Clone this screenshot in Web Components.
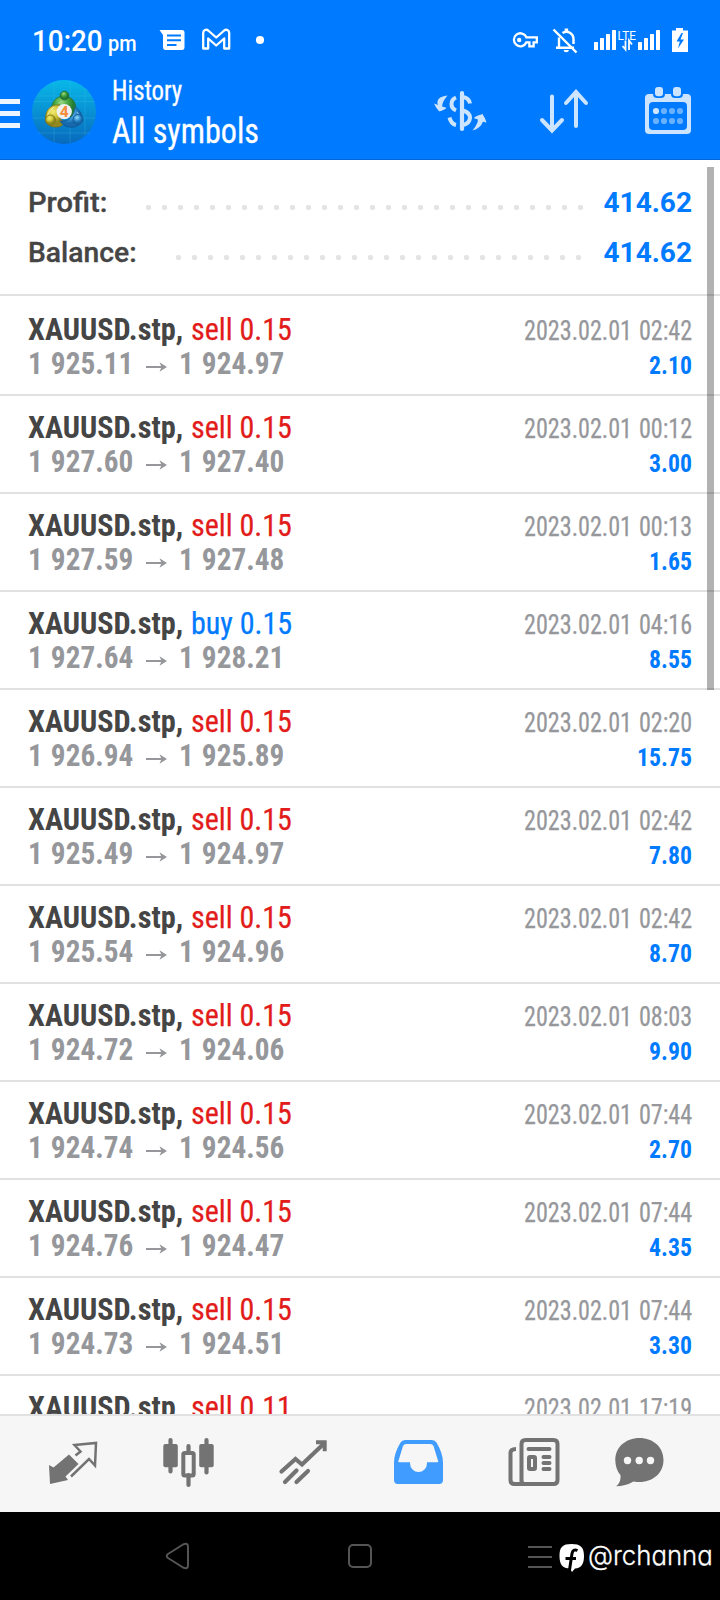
<!DOCTYPE html>
<html lang="en">
<head>
<meta charset="utf-8">
<title>History</title>
<style>
html,body{margin:0;padding:0}
body{width:720px;height:1600px;overflow:hidden;background:#fff;font-family:Roboto,"Liberation Sans",sans-serif}
</style>
</head>
<body>
<history-screen></history-screen>
<script>
const define = (name, html, setup) => {
  const t = document.createElement('template');
  t.innerHTML = html;
  customElements.define(name, class extends HTMLElement {
    connectedCallback() {
      if (this.shadowRoot) return;
      this.attachShadow({mode: 'open'}).append(t.content.cloneNode(true));
      if (setup) setup(this, this.shadowRoot);
    }
  });
};

// Narrow text: the sample string "ref" sets in exactly "w" pixels, other strings use the same ratio.
customElements.define('fit-text', class extends HTMLElement {
  connectedCallback() {
    if (this.shadowRoot) return;
    const root = this.attachShadow({mode: 'open'});
    root.innerHTML = '<style>:host{display:inline-block;white-space:pre;flex:none}span{display:inline-block;transform-origin:0 50%}</style><span></span>';
    const span = root.querySelector('span');
    const text = this.getAttribute('text');
    span.textContent = this.getAttribute('ref') || text;
    const k = this.getAttribute('w') / span.offsetWidth;
    span.textContent = text;
    const width = span.getBoundingClientRect().width;
    this.style.width = width * k + 'px';
    span.style.transform = `scaleX(${k})`;
  }
});

define('status-bar', `<style>
:host{display:flex;height:80px;box-sizing:border-box;padding:0 30px 0 32px;align-items:flex-start;color:#fff}
.time{display:flex;align-items:baseline;padding-top:24px;gap:5px;width:127px;line-height:34px}
.h{font-size:29px;font-weight:500}.p{font-size:22px;font-weight:500}
svg{display:block;flex:none}.r{margin-left:auto}
</style>
<div class="time"><fit-text class="h" text="10:20" w="71"></fit-text><fit-text class="p" text="pm" w="29"></fit-text></div>
<svg width="112" height="80" viewBox="159 0 112 80">
<path d="M159.500 30H182q2.500 0 2.500 2.500V47q0 3-2.500 3h-16.500q-2.500 0-2.500-3V35Z" fill="#fff"/>
<path d="M167 35.500h14M167 40.300h14M167 45h9.500" stroke="#007bff" stroke-width="2"/>
<path d="M203.200 48.500V33c0-3 3-4 5-2.500l8 7 8-7c2-1.500 5-.5 5 2.500v15.500h-5V38.500l-8 7-8-7v10Z" fill="none" stroke="#fff" stroke-width="2.300" stroke-linejoin="round"/>
<circle cx="260" cy="40" r="4.100" fill="#fff"/>
</svg>
<svg class="r" width="180" height="80" viewBox="510 0 180 80" fill="none" stroke="#fff">
<path d="M526.500 37.300h10.300v5h-3.200v4h-4.200v-4h-3a6.500 6.500 0 1 1 0-5Z" stroke-width="2.300"/><circle cx="519.200" cy="40" r="2.200" fill="#fff" stroke="none"/>
<path d="M559 37.500v10.300h15M556 47.800h18M562.500 33q3.500-2.500 7.500-.2 3.500 2.200 3.500 6.200v5" stroke-width="2.400"/><path d="M553.500 29.500l23 23" stroke-width="2.400"/><path d="M566.400 28.500v3" stroke-width="3.500"/><path d="M563.500 50h5.500a2.800 2.800 0 0 1-5.500 0Z" fill="#fff" stroke="none"/>
<g fill="#fff" stroke="none"><rect x="594" y="42" width="4" height="8" rx=".6"/><rect x="600" y="38" width="4" height="12" rx=".6"/><rect x="606" y="34" width="4" height="16" rx=".6"/><rect x="612" y="30" width="4" height="20" rx=".6"/>
<rect x="638" y="42" width="4" height="8" rx=".6"/><rect x="644" y="38" width="4" height="12" rx=".6"/><rect x="650" y="34" width="4" height="16" rx=".6"/><rect x="656" y="30" width="4" height="20" rx=".6"/>
<text x="617.500" y="40" font-family="Roboto" font-size="12" textLength="18.500" lengthAdjust="spacingAndGlyphs">LTE</text>
<path d="M676 28h7v2.500h5V52h-16V30.500h4Z"/></g>
<path d="M625.500 40.500v9l-3-3.500M629 50v-9.500l3 4" stroke-width="1.800"/>
<path d="M681.500 33l-5 8.500h3.300l-1.800 7 6-9h-3.500l2.500-6.500Z" fill="#007bff" stroke="none"/>
</svg>`);

define('app-bar', `<style>
:host{display:flex;height:80px;box-sizing:border-box;border-bottom:1px solid #0067d6;color:#fff}
svg{display:block;flex:none}
.t{display:flex;flex-direction:column;margin-left:8px;width:312px;font-stretch:75%;-webkit-text-stroke:.3px #fff}
.a{font-size:27px;line-height:32px;height:27px;margin-top:-5px}.b{font-size:35px;line-height:44px;margin-top:8px}
</style>
<svg width="104" height="79" viewBox="0 80 104 79">
<defs><linearGradient id="g" x1="0" y1="0" x2="0" y2="1"><stop offset="0" stop-color="#08b8e8"/><stop offset="1" stop-color="#0869bd"/></linearGradient>
<radialGradient id="gr" cx=".4" cy=".3"><stop offset="0" stop-color="#a0d988"/><stop offset=".5" stop-color="#4cab43"/><stop offset="1" stop-color="#257b31"/></radialGradient>
<radialGradient id="ye" cx=".4" cy=".3"><stop offset="0" stop-color="#f3ed73"/><stop offset=".6" stop-color="#cfc437"/><stop offset="1" stop-color="#918a20"/></radialGradient>
<radialGradient id="bl" cx=".4" cy=".3"><stop offset="0" stop-color="#9adaf5"/><stop offset=".6" stop-color="#3694d4"/><stop offset="1" stop-color="#1569ac"/></radialGradient></defs>
<path d="M0 101.500h20M0 113.500h20M0 125.500h20" stroke="#ebf4ff" stroke-width="5"/>
<circle cx="64" cy="112" r="32" fill="url(#g)"/>
<path d="M54 82v60M70 81v62M85 88v47M37 96h54M33 101.500h62M33 118h62M38 133h52" stroke="#42c2eb" stroke-opacity=".25" fill="none"/>
<path d="M51.500 108c1-8 6-12 12.500-12s12 5 12 13c0 5-3 8-6 8-2-6-9-9-18.500-6Z" fill="url(#gr)" stroke="#226f3b" stroke-width=".7"/>
<path d="M60 105c-8-1-14 4-14.500 12-.5 7 5 10.500 11 10 4 0 7-2 8-5-6-3-7-9-4.500-17Z" fill="url(#ye)" stroke="#766e1b" stroke-width=".7"/>
<path d="M75 107c5 3 8 8 7 14-2 5-8 7-13 6-5-1-7-3-9-6 8 1 14-4 15-14Z" fill="url(#bl)" stroke="#104f8f" stroke-width=".7"/>
<path d="M54 107q-6 4-7 10M77 112q4 4 3 9" stroke="#fff" stroke-opacity=".5" fill="none"/>
<circle cx="64.500" cy="95.500" r="4.300" fill="url(#gr)" stroke="#1b6330" stroke-width=".8"/><circle cx="50.500" cy="120" r="5" fill="url(#ye)" stroke="#777019" stroke-width=".8"/><circle cx="78" cy="119.500" r="5" fill="url(#bl)" stroke="#14568e" stroke-width=".8"/>
<circle cx="64.200" cy="111.600" r="7.700" fill="#f0f0f1"/>
<text x="64.200" y="117.200" text-anchor="middle" font-family="Roboto" font-weight="700" font-size="15.500" fill="#f48c36">4</text>
</svg>
<div class="t"><fit-text class="a" text="History" w="70"></fit-text><fit-text class="b" text="All symbols" w="147"></fit-text></div>
<svg width="296" height="79" viewBox="424 80 296 79" fill="none" stroke="#cde4ff" stroke-linecap="round">
<path d="M462 93v36" stroke-width="4.200"/>
<path d="M456 97.500q-4.500 2-4.500 6.500t4.500 6.500M449.500 117.500q1.500 6.500 6.500 7.500M463 97q6 1 7 6.500M463 110.500q7 2 7 7.500-.5 5.500-7 7" stroke-width="4" stroke-linecap="butt"/>
<path d="M447.500 95.500Q435 97 438 105.500l-3.500-1q1.500 3.500 4.500 6.500 5-.5 7-3l-4-1q0-5 5.500-11.500ZM472.500 130.500q8-2 10.500-9l3.500 1q-1-4.500-4-8-6 .5-8.500 3.500l4 1q0 5-5.500 11.500Z" fill="#cde4ff" stroke="none"/>
<path d="M434 103.500l5.500 8 7-3.500ZM486 122.500l-3.500-8.500-8.500 4Z" fill="#cde4ff" stroke="none"/>
<path d="M552 96.500V130M542 120l10 10.500L562 120M576 126V93M566 103l10-11 10 11" stroke-width="4"/>
<path d="M649 94h38q4 0 4 4v32q0 4-4 4h-38q-4 0-4-4V98q0-4 4-4ZM653 102q-4 0-4 4v20q0 4 4 4h30q4 0 4-4v-20q0-4-4-4Z" fill="#cde4ff" fill-rule="evenodd" stroke="none"/>
<g stroke="none"><rect x="653" y="85" width="12" height="13" rx="4" fill="#007bff"/><rect x="671" y="85" width="12" height="13" rx="4" fill="#007bff"/>
<rect x="655" y="87" width="8" height="9.300" rx="3" fill="#cde4ff"/><rect x="673" y="87" width="8" height="9.300" rx="3" fill="#cde4ff"/></g>
<circle cx="656" cy="111" r="3.100" fill="#cde4ff" stroke="none"/><g fill="#69b0ff" stroke="none"><circle cx="664" cy="111" r="3.100"/><circle cx="672" cy="111" r="3.100"/><circle cx="680" cy="111" r="3.100"/><circle cx="656" cy="121" r="3.100"/><circle cx="664" cy="121" r="3.100"/><circle cx="672" cy="121" r="3.100"/><circle cx="680" cy="121" r="3.100"/></g>
</svg>`);

define('summary-line', `<style>
:host{display:flex;height:50px;line-height:50px;padding:0 28px;align-items:stretch;font-size:28px}
.l{font-weight:500;color:#454545;-webkit-text-stroke:.35px #454545}
.v{font-weight:700;color:#007aff}
i{height:5px;align-self:flex-start;margin-top:27px;background:radial-gradient(circle at 2.5px 2.5px,#e4e4e4 2.3px,transparent 3px) 0 0/16px 5px repeat-x}
b{flex:1}
</style><fit-text class="l"></fit-text><b></b><i></i><fit-text class="v"></fit-text>`, (el, r) => {
  const [label, w, dots, end] = ['label', 'w', 'dots', 'end'].map(a => el.getAttribute(a));
  const swap = (sel, text, width) => {
    const f = document.createElement('fit-text'); f.className = sel.slice(1);
    f.setAttribute('text', text); f.setAttribute('w', width); r.querySelector(sel).replaceWith(f);
  };
  swap('.l', label, w); swap('.v', el.getAttribute('value'), 88);
  const i = r.querySelector('i'); i.style.width = dots * 16 - 11 + 'px'; i.style.marginRight = end + 'px';
});

customElements.define('trade-row', class extends HTMLElement {
  connectedCallback() {
    if (this.shadowRoot) return;
    const g = a => this.getAttribute(a);
    const side = g('side');
    this.attachShadow({mode: 'open'}).innerHTML = `<style>
:host{display:block;height:98px;box-sizing:border-box;border-bottom:2px solid #e1e1e1;padding:14px 28px 0;font-stretch:75%}
.line{display:flex;align-items:baseline;height:34px;line-height:34px;font-size:32px}
.s{font-weight:700;color:#454545}.sell{color:#e21b1b}.buy{color:#007aff}.sell,.buy{-webkit-text-stroke:.25px currentColor}
.s{margin-right:8px}.pr{font-weight:700;color:#96979b;word-spacing:1.5px}
.d{font-size:27px;color:#96979b;margin-left:auto;word-spacing:1.5px;-webkit-text-stroke:.25px #96979b}.v{font-size:26.500px;font-weight:700;color:#007aff;margin-left:auto}
svg{flex:none;width:21px;height:12px;margin:0 12px 7px 13px;align-self:flex-end}
</style>
<div class="line"><fit-text class="s" text="XAUUSD.stp," w="155"></fit-text><fit-text class="${side}" text="${side} ${g('lots')}" ref="sell 0.15" w="100.5"></fit-text><fit-text class="d" text="${g('time')}" ref="2023.02.01 02:42" w="168"></fit-text></div>
<div class="line"><fit-text class="pr" text="${g('open')}" ref="1 925.11" w="105"></fit-text><svg viewBox="0 0 21 12"><path d="M0 6h17" stroke="#96979b" stroke-width="2"/><path d="M13.500 1.200 21 6l-7.500 4.800L15.500 6Z" fill="#96979b"/></svg><fit-text class="pr" text="${g('close')}" ref="1 925.11" w="105"></fit-text><fit-text class="v" text="${g('profit')}" ref="2.10" w="43"></fit-text></div>`;
  }
});

define('tab-bar', `<style>
:host{display:grid;grid-template-columns:114px 115px 115px 115px 107px 1fr;height:98px;box-sizing:border-box;border-top:2px solid #e1e1e1;background:#f6f6f6;padding:20px 0 0 46px;overflow:hidden}
svg{display:block;width:56px;height:56px;color:#737373}
</style>
<svg viewBox="46 1436 56 56" fill="none" stroke="currentColor"><path d="M69 1454.500l9.500 9.500-13 12.500 2.500 3.500-18 4-1-19 4.500 2.500Z" fill="currentColor" stroke="none"/><path d="M75.500 1455.500l5-4-6-6.500 21.500-2-1 22.500-6-6.500-18 17.500" stroke-width="2.500"/></svg>
<svg viewBox="160 1436 56 56" fill="none" stroke="currentColor"><path d="M170.500 1440v31.500M206.500 1440v32.500M188.500 1446v7M188.500 1475v10" stroke-width="4.200" stroke-linecap="round"/><rect x="163.300" y="1444" width="14.500" height="23.300" rx="2" fill="currentColor" stroke="none"/><rect x="199.200" y="1444" width="14.500" height="23.300" rx="2" fill="currentColor" stroke="none"/><rect x="183.300" y="1453" width="10.400" height="22.500" rx="1.500" stroke-width="4"/></svg>
<svg viewBox="275 1436 56 56" fill="none" stroke="currentColor" stroke-width="4.200" stroke-linecap="round"><path d="M281.500 1471.500l14-12.500 6.500 5.500 22-21"/><path d="M316 1442.200h8.700v9" stroke-width="4" stroke-linecap="butt"/><path d="M285 1482l11.500-11.500M296.500 1482l11.500-11"/></svg>
<svg viewBox="390 1436 56 56"><path fill="#409cff" fill-rule="evenodd" d="M405 1440h27q3 0 4.500 2.500 6.500 11 6.500 20V1480q0 4-4 4h-41q-4 0-4-4v-17.500q0-9 6.500-20 1.500-2.500 4.500-2.500ZM406 1444q-2 0-3 2l-4 13-.8 2.500q0 .8 1.300.8H410v1a8.500 8.700 0 0 0 17 0v-1h10q1.300 0 1.300-.8l-.8-2.500-4-13q-1-2-3-2Z"/></svg>
<svg viewBox="504.500 1436 56 56" fill="none" stroke="currentColor" stroke-width="4"><path d="M521 1484v-40q0-4 4-4h28q4 0 4 4v36q0 4-4 4h-39q-4 0-4-4v-27q0-4 5.500-4M519 1484h5q-3 0-3-4"/><path d="M528 1449h21M543 1457h6M543 1463h6M543 1469h6" stroke-linecap="round"/><rect x="528.500" y="1457" width="6" height="12" rx="1"/></svg>
<svg viewBox="612 1436 56 56"><path fill="currentColor" d="M639.500 1438c14 0 24 9.500 24 22s-10 22-24 22q-2.500 0-6-.6-8 4.800-17.500 4.800c3-2 5-6 4.500-11q-5.200-6-5.200-15.200c0-12.500 10.200-22 24.200-22Z"/><g fill="#f6f6f6"><circle cx="627.500" cy="1460.500" r="3.700"/><circle cx="639.200" cy="1460.500" r="3.700"/><circle cx="650.500" cy="1460.500" r="3.700"/></g></svg>`);

define('system-nav', `<style>
:host{display:flex;height:88px;background:#000;color:#fff;box-sizing:border-box}
svg{display:block;flex:none}fit-text{font:300 27px/34px Inter,sans-serif;font-feature-settings:"cv11";margin-top:27px;-webkit-text-stroke:.3px #fff}
</style>
<svg width="588" height="88" viewBox="0 1512 588 88" fill="none" stroke="#555" stroke-width="2"><path d="M168 1554q-2.500 2 0 4l15 9.500q5 2 5-2v-19q0-4-5-2Z" stroke-linejoin="round"/><rect x="349" y="1545" width="22" height="22" rx="4"/><path d="M528 1547h24M528 1557h24M528 1567h24"/>
<path d="M571.500 1544c9 0 12.500 3 12.500 12 0 8-2.500 12-9 12.500l-3 3.500-2-3.500c-7.500 0-10.500-4-10.500-12.500 0-9 3-12 12-12Z" fill="#fff" stroke="none"/><path d="M577.500 1550.500q-4.500-2-5.500 3l-2.500 16.500M565.500 1558.500h10.500" stroke="#000" stroke-width="3"/></svg>
<fit-text text="@rchanna" w="125"></fit-text>`);

define('history-screen', `<style>
:host{display:flex;flex-direction:column;width:720px;height:1600px;background:#fff;font-family:Roboto,"Liberation Sans",sans-serif}
header{background:#007bff;flex:none;height:160px}
main{position:relative;flex:1;min-height:0;overflow:hidden}
section{height:136px;box-sizing:border-box;padding-top:18px;border-bottom:2px solid #e1e1e1;margin-bottom:2px}
.bar{position:absolute;right:6.500px;top:6.500px;width:7px;height:523px;background:rgba(0,0,0,.3)}
tab-bar,system-nav{flex:none}
</style>
<header><status-bar></status-bar><app-bar></app-bar></header>
<main><section>
<summary-line label="Profit:" w="79" dots="28" value="414.62" end="21"></summary-line>
<summary-line label="Balance:" w="109" dots="26" value="414.62" end="23"></summary-line>
</section><div id="list"></div><div class="bar"></div></main>
<tab-bar></tab-bar><system-nav></system-nav>`, (el, r) => {
  const rows = [
    ['sell','0.15','02:42','1 925.11','1 924.97','2.10'],
    ['sell','0.15','00:12','1 927.60','1 927.40','3.00'],
    ['sell','0.15','00:13','1 927.59','1 927.48','1.65'],
    ['buy','0.15','04:16','1 927.64','1 928.21','8.55'],
    ['sell','0.15','02:20','1 926.94','1 925.89','15.75'],
    ['sell','0.15','02:42','1 925.49','1 924.97','7.80'],
    ['sell','0.15','02:42','1 925.54','1 924.96','8.70'],
    ['sell','0.15','08:03','1 924.72','1 924.06','9.90'],
    ['sell','0.15','07:44','1 924.74','1 924.56','2.70'],
    ['sell','0.15','07:44','1 924.76','1 924.47','4.35'],
    ['sell','0.15','07:44','1 924.73','1 924.51','3.30'],
    ['sell','0.11','17:19','1 924.70','1 924.40','2.20']
  ];
  for (const [side, lots, time, open, close, profit] of rows) {
    const row = document.createElement('trade-row');
    Object.entries({side, lots, time: '2023.02.01 ' + time, open, close, profit}).forEach(([k, v]) => row.setAttribute(k, v));
    r.getElementById('list').append(row);
  }
});
</script>
</body>
</html>
